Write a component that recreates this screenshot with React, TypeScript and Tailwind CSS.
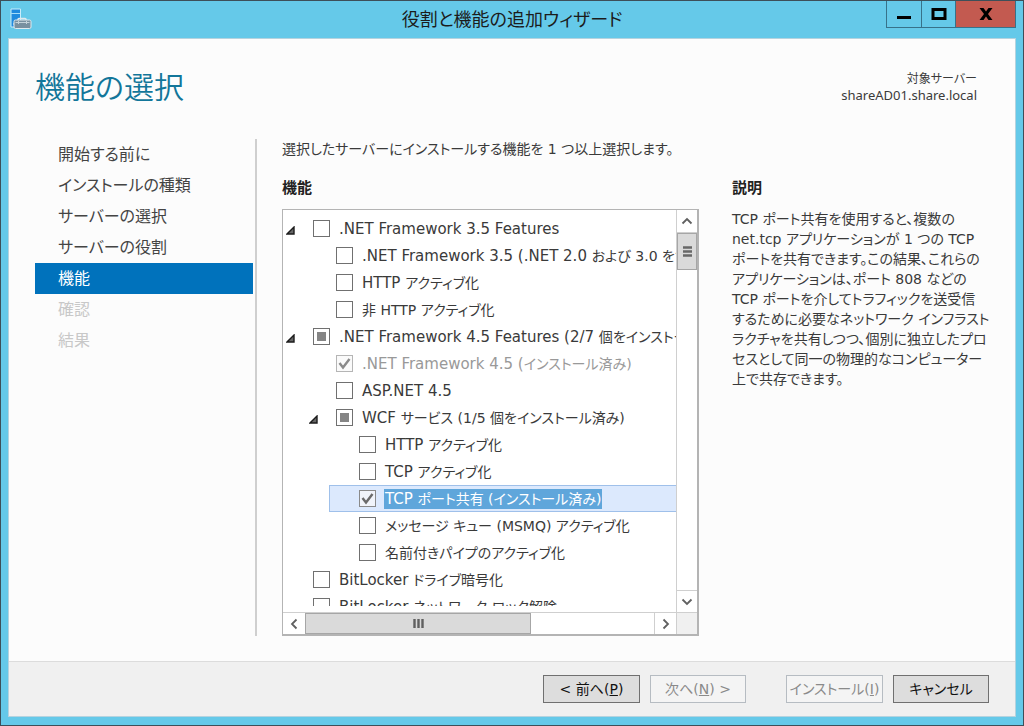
import React, { useState } from 'react';

type CheckState = 'off' | 'on' | 'partial';

interface Feature {
  id: string;
  label: string;
  level: 0 | 1 | 2;
  state: CheckState;
  expanded?: boolean;
  installed?: boolean;
}

const steps = [
  { label: '開始する前に' },
  { label: 'インストールの種類' },
  { label: 'サーバーの選択' },
  { label: 'サーバーの役割' },
  { label: '機能', current: true },
  { label: '確認', disabled: true },
  { label: '結果', disabled: true },
];

const features: Feature[] = [
  { id: 'net35', label: '.NET Framework 3.5 Features', level: 0, state: 'off', expanded: true },
  { id: 'net35-core', label: '.NET Framework 3.5 (.NET 2.0 および 3.0 を含む)', level: 1, state: 'off' },
  { id: 'net35-http', label: 'HTTP アクティブ化', level: 1, state: 'off' },
  { id: 'net35-nonhttp', label: '非 HTTP アクティブ化', level: 1, state: 'off' },
  { id: 'net45', label: '.NET Framework 4.5 Features (2/7 個をインストール済み)', level: 0, state: 'partial', expanded: true },
  { id: 'net45-core', label: '.NET Framework 4.5 (インストール済み)', level: 1, state: 'on', installed: true },
  { id: 'aspnet45', label: 'ASP.NET 4.5', level: 1, state: 'off' },
  { id: 'wcf', label: 'WCF サービス (1/5 個をインストール済み)', level: 1, state: 'partial', expanded: true },
  { id: 'wcf-http', label: 'HTTP アクティブ化', level: 2, state: 'off' },
  { id: 'wcf-tcp', label: 'TCP アクティブ化', level: 2, state: 'off' },
  { id: 'wcf-port', label: 'TCP ポート共有 (インストール済み)', level: 2, state: 'on' },
  { id: 'wcf-msmq', label: 'メッセージ キュー (MSMQ) アクティブ化', level: 2, state: 'off' },
  { id: 'wcf-pipe', label: '名前付きパイプのアクティブ化', level: 2, state: 'off' },
  { id: 'bitlocker', label: 'BitLocker ドライブ暗号化', level: 0, state: 'off' },
  { id: 'bitlocker-net', label: 'BitLocker ネットワーク ロック解除', level: 0, state: 'off' },
];

const description = [
  'TCP ポート共有を使用すると、複数の',
  'net.tcp アプリケーションが 1 つの TCP',
  'ポートを共有できます。この結果、これらの',
  'アプリケーションは、ポート 808 などの',
  'TCP ポートを介してトラフィックを送受信',
  'するために必要なネットワーク インフラスト',
  'ラクチャを共有しつつ、個別に独立したプロ',
  'セスとして同一の物理的なコンピューター',
  '上で共存できます。',
];

const indent = ['ml-0', 'ml-[23px]', 'ml-[46px]'];

// Leading product names are set one step larger than the Japanese text
function FeatureLabel({ text }: { text: string }) {
  const [latin] = text.match(/^[\x20-\x7e]*/) ?? [''];
  return (
    <>
      {latin && <span className="text-[15px]">{latin}</span>}
      {text.slice(latin.length)}
    </>
  );
}

function ServerIcon() {
  return (
    <svg className="ml-[2px] mt-[7px] h-[22px] w-[22px]" viewBox="0 0 22 22">
      <path d="M1 1h9.500v18H1z" fill="#1f8ade" stroke="#c9ecfa" />
      <path d="M1 5.500h9" stroke="#a5dcf8" />
      <path d="M3 16h2" stroke="#e5f6fd" />
      <path d="M8 12.500v-1q0-1 1-1h6q1 0 1 1v1" fill="none" stroke="#dfe9ee" strokeWidth="1.500" />
      <rect x="4" y="12" width="17" height="8.500" rx="1.500" fill="#7890a0" stroke="#dfe9ee" />
      <path d="M5.500 14.500h14M8.500 13v3M16.500 13v3" stroke="#c3d2da" fill="none" />
    </svg>
  );
}

function CheckBox({ feature, onToggle }: { feature: Feature; onToggle: () => void }) {
  const { id, state, installed } = feature;
  return (
    <span className="relative h-[17px] w-[17px] shrink-0">
      <input
        id={id}
        type="checkbox"
        checked={state === 'on'}
        disabled={installed}
        ref={(el) => {
          if (el) el.indeterminate = state === 'partial';
        }}
        onChange={onToggle}
        className={`block h-[17px] w-[17px] appearance-none border ${
          installed ? 'border-[#b5b5b5] bg-[#fafafa]' : state === 'on' ? 'border-[#8a8a8a] bg-[#f1f4fa]' : 'border-[#707070] bg-white'
        }`}
      />
      {state === 'partial' && <span className="pointer-events-none absolute inset-1 bg-[#858585]" />}
      {state === 'on' && (
        <svg className="pointer-events-none absolute inset-0 h-[17px] w-[17px]" viewBox="0 0 17 17" fill="none">
          <path d="M3.500 8l3.500 4.500 6.500-8.500" stroke={installed ? '#8a8a8a' : '#6b6b6b'} strokeWidth="2.400" />
        </svg>
      )}
    </span>
  );
}

function Chevron({ d }: { d: string }) {
  return (
    <svg className="h-3 w-3" viewBox="0 0 12 12" fill="none" stroke="#606060" strokeWidth="1.800">
      <path d={d} />
    </svg>
  );
}

export default function App() {
  const [items, setItems] = useState(features);
  const [selected, setSelected] = useState('wcf-port');

  const toggle = (id: string) => {
    setSelected(id);
    setItems(items.map((f) => (f.id === id ? { ...f, state: f.state === 'on' ? 'off' : 'on' } : f)));
  };

  return (
    <div className="flex h-screen flex-col border border-[#3d4f59] bg-[#65c9e9] px-[7px] pb-2 font-['DejaVu_Sans','Noto_Sans_CJK_JP',sans-serif] text-[14px] text-[#3a3a3a] [font-feature-settings:'palt']">
      {/* Title bar */}
      <header className="flex h-[37px] shrink-0 items-start">
        <div className="w-[130px]">
          <ServerIcon />
        </div>
        <h1 className="flex-1 text-center text-[18px] leading-[38px] text-[#1c1c1c]">役割と機能の追加ウィザード</h1>
        <div className="flex h-[27px] w-[130px] border border-t-0 border-[#37728a]">
          <button type="button" aria-label="最小化" className="flex flex-1 items-center justify-center border-r border-[#37728a]">
            <svg className="h-4 w-4" viewBox="0 0 16 16">
              <path d="M1 10h14v3H1z" fill="#000" />
            </svg>
          </button>
          <button type="button" aria-label="最大化" className="flex w-[34px] items-center justify-center border-r border-[#37728a]">
            <svg className="h-4 w-4" viewBox="0 0 16 16">
              <path d="M2 3.500h12v9H2z" fill="none" stroke="#000" strokeWidth="3" />
            </svg>
          </button>
          <button type="button" aria-label="閉じる" className="flex w-[59px] items-center justify-center bg-[#c35a50]">
            <svg className="h-4 w-4" viewBox="0 0 16 16">
              <path d="M1.500 2h4L8 5.500 10.500 2h4L10 8l4.500 6h-4L8 10.500 5.500 14h-4L6 8z" fill="#000" />
            </svg>
          </button>
        </div>
      </header>

      <div className="flex min-h-0 flex-1 flex-col border border-[#b5d3df] bg-[#fcfcfc]">
        <div className="flex h-[100px] shrink-0 items-start justify-between pl-[26px] pr-[38px]">
          <h2 className="mt-[26px] text-[30px] font-[350] leading-[46px] text-[#12769a]">機能の選択</h2>
          <p className="mt-[31px] text-right font-['Noto_Sans','Noto_Sans_CJK_JP',sans-serif] text-[12px] leading-[17px]">
            対象サーバー
            <br />
            <span className="text-[13px]">shareAD01.share.local</span>
          </p>
        </div>

        <main className="flex min-h-0 flex-1 pb-[25px] pl-[26px] pr-[26px]">
          <nav className="w-[222px] shrink-0 border-r-2 border-[#cfcfcf] pr-[2px]">
            <ol>
              {steps.map((s) => (
                <li key={s.label}>
                  <a
                    href="#"
                    aria-current={s.current ? 'step' : undefined}
                    aria-disabled={s.disabled}
                    className={`block h-[31px] pl-[23px] text-[16px] leading-[31px] ${
                      s.current ? 'bg-[#0072bc] text-white' : s.disabled ? 'text-[#c8c8c8]' : 'text-[#444]'
                    }`}
                  >
                    {s.label}
                  </a>
                </li>
              ))}
            </ol>
          </nav>

          <section className="ml-[25px] flex min-w-0 flex-1 flex-col">
            <p className="whitespace-nowrap leading-5">選択したサーバーにインストールする機能を 1 つ以上選択します。</p>
            <h3 className="mt-[19px] text-[15px] font-bold leading-5 text-[#222]">機能</h3>
            <div className="mt-[11px] flex min-h-0 flex-1 flex-col border border-b-2 border-r-2 border-[#b4b4b4] bg-white">
              <div className="flex min-h-0 flex-1">
                <div className="min-w-0 flex-1 overflow-hidden pb-[6px]">
                  <ul className="h-full overflow-hidden pt-[5px]">
                    {items.map((f) => {
                      const active = f.id === selected;
                      return (
                        <li
                          key={f.id}
                          className={`flex h-[27px] items-center ${indent[f.level]} ${
                            active ? 'border-y border-l border-[#9fc0ea] bg-[#dce9fd]' : 'border-l border-transparent'
                          }`}
                        >
                          <span className="w-[29px] shrink-0">
                            {f.expanded && (
                              <button type="button" aria-label="折りたたむ" className="ml-[2px] block">
                                <svg className="mt-1 h-[9px] w-[9px]" viewBox="0 0 9 9">
                                  <path d="M8 1v7H1z" fill="#666" stroke="#1c1c1c" strokeWidth="1.400" />
                                </svg>
                              </button>
                            )}
                          </span>
                          <CheckBox feature={f} onToggle={() => toggle(f.id)} />
                          <label
                            htmlFor={f.id}
                            className={`ml-2 whitespace-nowrap px-px leading-5 ${
                              active ? 'bg-[#5fa6db] text-white' : f.installed ? 'text-[#999]' : ''
                            }`}
                          >
                            <FeatureLabel text={f.label} />
                          </label>
                        </li>
                      );
                    })}
                  </ul>
                </div>
                <div className="flex w-[21px] shrink-0 flex-col border-l border-[#cfcfcf] bg-white">
                  <button type="button" aria-label="上へ" className="flex h-[23px] items-center justify-center border-b border-[#cfcfcf]">
                    <Chevron d="M1.500 8.500L6 4l4.500 4.500" />
                  </button>
                  <div className="flex h-[37px] items-center justify-center border border-[#a6a6a6] bg-[#dadada]">
                    <svg className="h-[11px] w-[9px]" viewBox="0 0 9 11">
                      <path d="M0 1.500h9M0 5.500h9M0 9.500h9" stroke="#686868" strokeWidth="2.400" />
                    </svg>
                  </div>
                  <div className="flex-1" />
                  <button type="button" aria-label="下へ" className="flex h-[22px] items-center justify-center border-t border-[#cfcfcf]">
                    <Chevron d="M1.500 3.500L6 8l4.500-4.500" />
                  </button>
                </div>
              </div>
              <div className="flex h-[22px] shrink-0 border-t border-[#cfcfcf]">
                <button type="button" aria-label="左へ" className="flex w-[22px] items-center justify-center">
                  <Chevron d="M8.500 1.500L4 6l4.500 4.500" />
                </button>
                <div className="flex w-[226px] items-center justify-center border border-[#a6a6a6] bg-[#dadada]">
                  <svg className="h-[9px] w-[11px]" viewBox="0 0 11 9">
                    <path d="M1.500 0v9M5.500 0v9M9.500 0v9" stroke="#606060" strokeWidth="2.400" />
                  </svg>
                </div>
                <div className="flex-1" />
                <button type="button" aria-label="右へ" className="flex w-[22px] items-center justify-center border-l border-[#cfcfcf]">
                  <Chevron d="M3.500 1.500L8 6l-4.500 4.500" />
                </button>
                <div className="w-[21px] border-l border-[#cfcfcf] bg-[#f0f0f0]" />
              </div>
            </div>
          </section>

          <aside className="ml-[33px] w-[257px] shrink-0">
            <h3 className="mt-[39px] text-[15px] font-bold leading-5 text-[#222]">説明</h3>
            <p className="mt-[11px] whitespace-nowrap leading-5">
              {description.map((line) => (
                <span key={line} className="block">
                  {line}
                </span>
              ))}
            </p>
          </aside>
        </main>

        <footer className="flex h-[55px] shrink-0 items-center justify-end border-t border-[#dcdcdc] bg-[#f0f0f0] pr-[26px]">
          <button type="button" className="h-7 w-[97px] whitespace-nowrap border border-[#707070] bg-[#dddddd] text-[#111]">
            &lt; 前へ(<u>P</u>)
          </button>
          <button type="button" disabled className="ml-[10px] h-7 w-24 whitespace-nowrap border border-[#b6bcc2] bg-[#f4f4f4] text-[#8a8a8a]">
            次へ(<u>N</u>) &gt;
          </button>
          <button type="button" disabled className="ml-10 h-7 w-[97px] whitespace-nowrap border border-[#b6bcc2] bg-[#f4f4f4] text-[#8a8a8a]">
            インストール(<u>I</u>)
          </button>
          <button type="button" className="ml-[10px] h-7 w-24 whitespace-nowrap border border-[#707070] bg-[#dddddd] text-[#111]">
            キャンセル
          </button>
        </footer>
      </div>
    </div>
  );
}
